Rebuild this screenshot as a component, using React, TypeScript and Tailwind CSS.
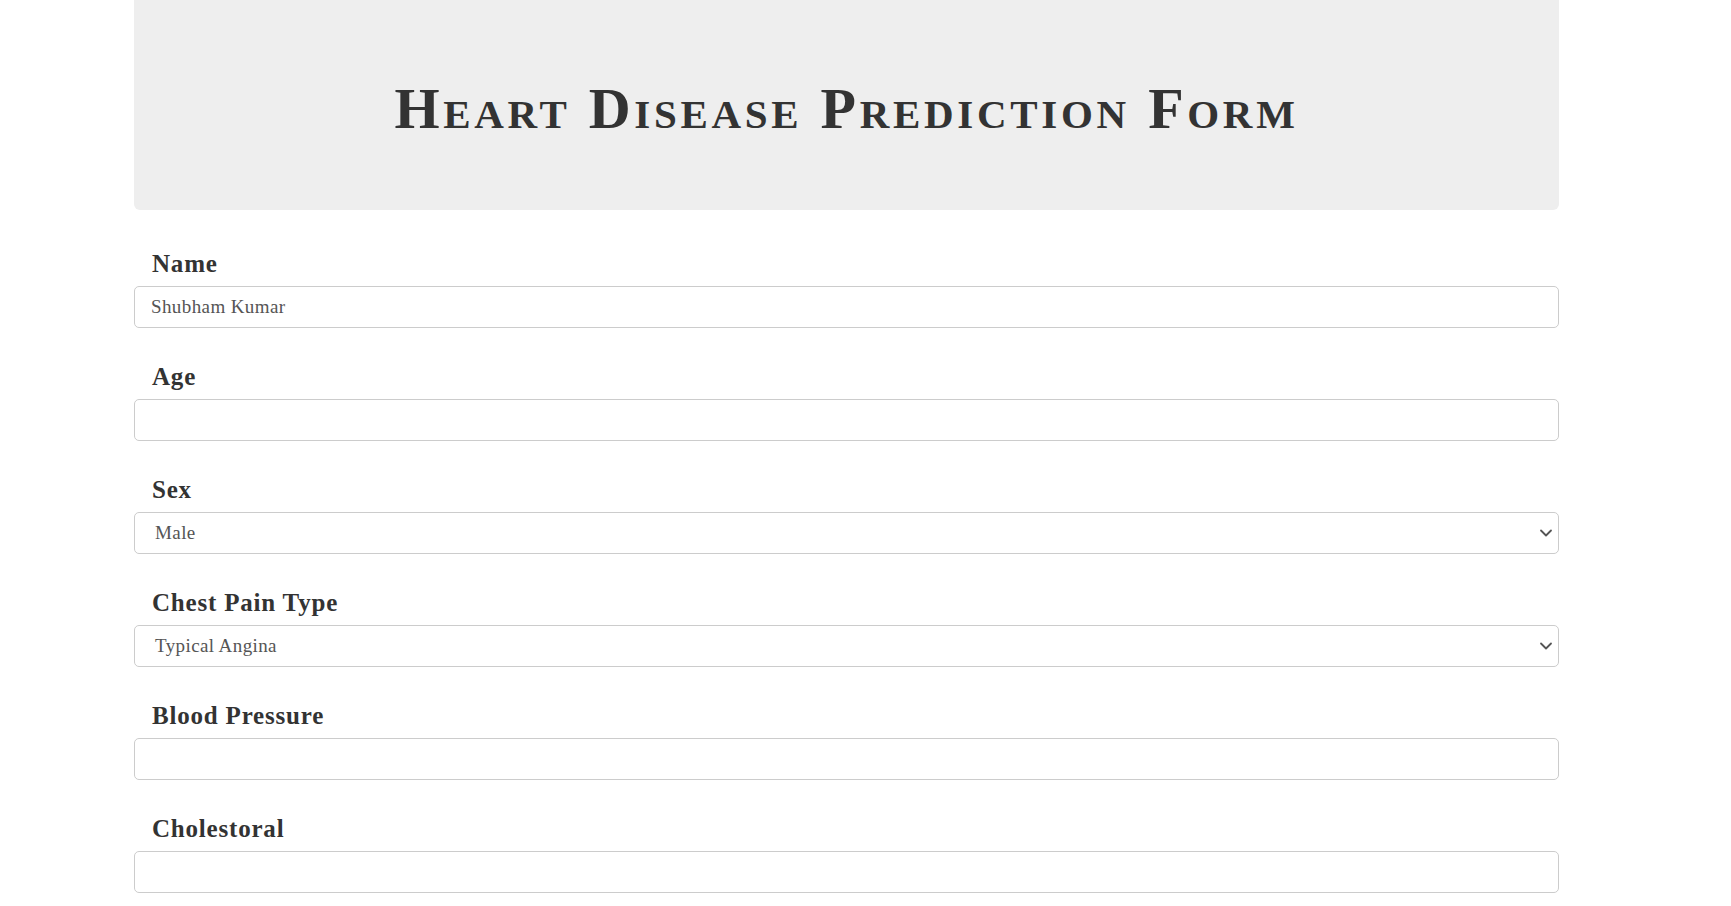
import { ChevronDown } from 'lucide-react';

type Field = {
  label: string;
  kind: 'input' | 'select';
  value?: string;
};

const fields: Field[] = [
  { label: 'Name', kind: 'input', value: 'Shubham Kumar' },
  { label: 'Age', kind: 'input' },
  { label: 'Sex', kind: 'select', value: 'Male' },
  { label: 'Chest Pain Type', kind: 'select', value: 'Typical Angina' },
  { label: 'Blood Pressure', kind: 'input' },
  { label: 'Cholestoral', kind: 'input' },
];

const serif = "font-['Liberation_Serif','Times_New_Roman',serif]";

function FormField({ field }: { field: Field }) {
  return (
    <div className="flex flex-col">
      <label className={`${serif} pl-[18px] text-[25px] leading-[30px] font-bold tracking-[0.8px] text-[#333]`}>
        {field.label}
      </label>
      <div className="mt-[7px] relative h-[42px] rounded-[5px] border border-[#ccc] bg-white flex items-center">
        {field.kind === 'input' ? (
          <span className={`${serif} pl-[16px] text-[19px] tracking-[0.4px] text-[#555]`}>{field.value ?? ''}</span>
        ) : (
          <>
            <span className={`${serif} pl-[20px] text-[19px] tracking-[0.4px] text-[#555]`}>{field.value}</span>
            <ChevronDown className="absolute right-[2px] top-1/2 -translate-y-1/2 w-[20px] h-[20px] text-[#555]" strokeWidth={2.2} />
          </>
        )}
      </div>
    </div>
  );
}

export default function App() {
  return (
    <div className="min-h-screen bg-white">
      <div className="ml-[134px] w-[1425px]">
        <div className="h-[210px] pt-[6px] bg-[#eeeeee] rounded-b-[6px] flex items-center justify-center">
          <h1
            className={`${serif} text-[58px] font-bold text-[#333] [font-variant:small-caps] tracking-[3.7px]`}
          >
            Heart Disease Prediction Form
          </h1>
        </div>
        <div className="mt-[39px] flex flex-col gap-[34px]">
          {fields.map((f) => (
            <FormField key={f.label} field={f} />
          ))}
        </div>
      </div>
    </div>
  );
}
